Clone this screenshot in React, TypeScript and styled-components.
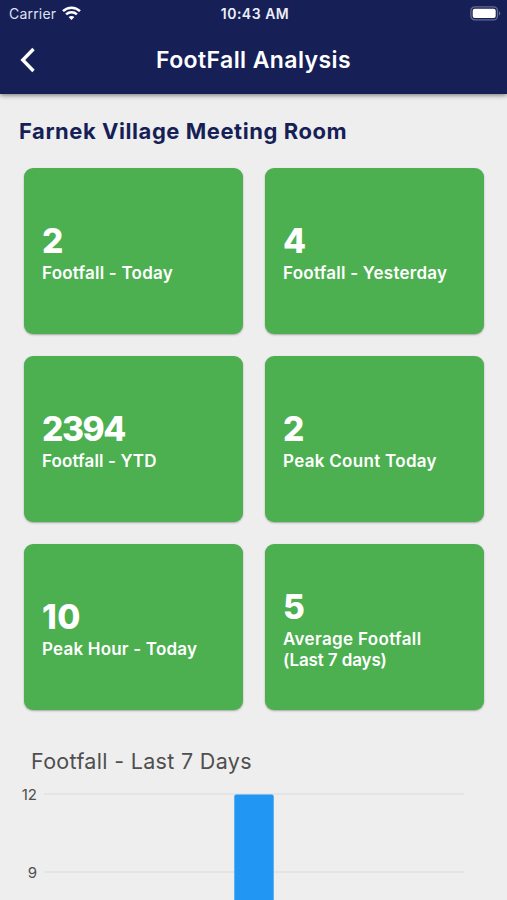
import React from "react";
import styled, { createGlobalStyle } from "styled-components";

const GlobalStyle = createGlobalStyle`
  * { box-sizing: border-box; }
  body { margin: 0; background: #eeeeee; overflow: hidden; }
`;

const Screen = styled.div`
  width: 507px;
  height: 900px;
  overflow: hidden;
  display: flex;
  flex-direction: column;
  background: #eeeeee;
  font-family: Inter, "Liberation Sans", sans-serif;
`;

const Header = styled.header`
  flex: none;
  height: 94px;
  background: #171f57;
  color: #fff;
  box-shadow: 0 1px 5px rgba(0, 0, 0, 0.55);
`;

const StatusBar = styled.div`
  display: grid;
  grid-template-columns: 1fr auto 1fr;
  align-items: center;
  height: 27px;
  padding: 0 6px 0 9px;
  font-size: 14px;
  line-height: 27px;
`;

const Carrier = styled.div`
  display: flex;
  align-items: center;
  gap: 6px;
  color: #dfe2f0;
  letter-spacing: 0.2px;
`;

const Clock = styled.div`
  font-weight: 600;
  letter-spacing: 0.5px;
  color: #eceefa;
`;

const Battery = styled.svg`
  justify-self: end;
`;

const NavBar = styled.div`
  display: grid;
  grid-template-columns: 56px 1fr 56px;
  align-items: center;
  height: 66px;
`;

const BackButton = styled.button`
  display: flex;
  padding: 0 0 0 20px;
  border: 0;
  background: none;
  color: inherit;
`;

const NavTitle = styled.h1`
  margin: 0;
  text-align: center;
  font-size: 23px;
  font-weight: 600;
  line-height: 28px;
  letter-spacing: 0.4px;
`;

const RoomName = styled.h2`
  flex: none;
  margin: 23px 0 0 19px;
  height: 28px;
  color: #171f57;
  font-size: 22px;
  font-weight: 700;
  line-height: 28px;
  letter-spacing: 0.55px;
  white-space: nowrap;
`;

const CardGrid = styled.div`
  flex: none;
  display: grid;
  grid-template-columns: 219px 219px;
  grid-auto-rows: 166px;
  gap: 22px;
  margin: 23px 0 0 24px;
`;

const Card = styled.div`
  display: flex;
  flex-direction: column;
  justify-content: center;
  padding: 2px 18px 0;
  border-radius: 9px;
  background: #4caf50;
  color: #fff;
  box-shadow: 0 1px 2px rgba(0, 0, 0, 0.3);
`;

const Value = styled.div<{ $tracking: number }>`
  font-size: 33.5px;
  font-weight: 800;
  line-height: 43px;
  letter-spacing: ${(p) => p.$tracking}px;
`;

const Label = styled.div<{ $tracking: number }>`
  font-size: 17px;
  font-weight: 600;
  line-height: 21px;
  letter-spacing: ${(p) => p.$tracking}px;
  white-space: nowrap;
`;

const ChartTitle = styled.h3`
  flex: none;
  margin: 37px 0 0 31px;
  height: 28px;
  color: #4f4f4f;
  font-size: 21.5px;
  font-weight: 400;
  line-height: 28px;
  letter-spacing: 0.32px;
`;

const Chart = styled.div`
  display: grid;
  grid-template-columns: 37px 420px;
  column-gap: 7px;
  margin-top: 9px;
`;

const Axis = styled.div`
  display: flex;
  flex-direction: column;
  gap: 58px;
  padding-top: 1px;
  text-align: right;
  color: #4f4f4f;
  font-size: 15px;
  line-height: 20px;
`;

type Line = { text: string; tracking: number };

const cards: { value: string; tracking: number; lines: Line[] }[] = [
  { value: "2", tracking: 0, lines: [{ text: "Footfall - Today", tracking: 0.22 }] },
  { value: "4", tracking: 0, lines: [{ text: "Footfall - Yesterday", tracking: 0.25 }] },
  { value: "2394", tracking: -1.4, lines: [{ text: "Footfall - YTD", tracking: 0.12 }] },
  { value: "2", tracking: 0, lines: [{ text: "Peak Count Today", tracking: 0.3 }] },
  { value: "10", tracking: 0.5, lines: [{ text: "Peak Hour - Today", tracking: 0.2 }] },
  {
    value: "5",
    tracking: 0,
    lines: [
      { text: "Average Footfall", tracking: 0.35 },
      { text: "(Last 7 days)", tracking: -0.12 },
    ],
  },
];

const WifiIcon = () => (
  <svg width="19" height="15" viewBox="0 0 19 15" fill="none" stroke="#fff" strokeWidth="2.5">
    <path d="M1 5.1C5.8.5 13.2.5 18 5.1" />
    <path d="M4.1 8.4c3-2.8 7.8-2.8 10.8 0" />
    <path d="M6.6 11.1c1.7-1.5 4.1-1.5 5.8 0L9.5 14z" fill="#fff" stroke="none" />
  </svg>
);

const BatteryIcon = () => (
  <Battery width="31" height="15" viewBox="0 0 31 15">
    <rect x=".9" y=".9" width="26.6" height="13" rx="4" fill="none" stroke="#666b8f" strokeWidth="1.3" />
    <rect x="2.7" y="2.7" width="23" height="9.4" rx="2" fill="#fff" />
    <path d="M29 5.2c1.8.8 1.8 3.6 0 4.4z" fill="#666b8f" />
  </Battery>
);

export default function App() {
  return (
    <Screen>
      <GlobalStyle />
      <Header>
        <StatusBar>
          <Carrier>
            Carrier
            <WifiIcon />
          </Carrier>
          <Clock>10:43 AM</Clock>
          <BatteryIcon />
        </StatusBar>
        <NavBar>
          <BackButton aria-label="Back">
            <svg width="16" height="26" viewBox="0 0 16 26" fill="none" stroke="#fff" strokeWidth="3.4">
              <path d="M13.5 2 2.8 13l10.7 11" />
            </svg>
          </BackButton>
          <NavTitle>FootFall Analysis</NavTitle>
        </NavBar>
      </Header>
      <RoomName>Farnek Village Meeting Room</RoomName>
      <CardGrid>
        {cards.map((c) => (
          <Card key={c.lines[0].text}>
            <Value $tracking={c.tracking}>{c.value}</Value>
            {c.lines.map((l) => (
              <Label key={l.text} $tracking={l.tracking}>
                {l.text}
              </Label>
            ))}
          </Card>
        ))}
      </CardGrid>
      <ChartTitle>Footfall - Last 7 Days</ChartTitle>
      <Chart>
        <Axis>
          <span>12</span>
          <span>9</span>
        </Axis>
        <svg width="420" height="116" viewBox="0 0 420 116">
          <path d="M0 10h420M0 88h420" stroke="#e4e4e4" strokeWidth="2" />
          <path d="M190.3 116V12.5q0-2 2-2h35.4q2 0 2 2V116z" fill="#2196f3" />
        </svg>
      </Chart>
    </Screen>
  );
}
